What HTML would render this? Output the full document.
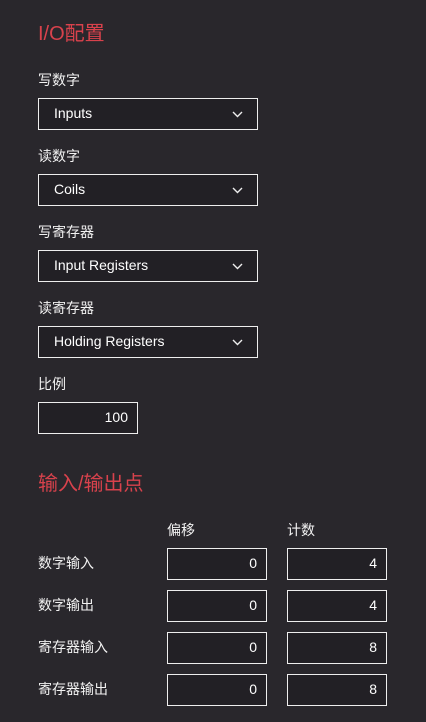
<!DOCTYPE html>
<html><head><meta charset="utf-8"><style>
body{margin:0;width:426px;height:722px;background:#29272c;font-family:"Liberation Sans","Noto Sans CJK SC",sans-serif;color:#fff;position:relative;overflow:hidden}
.a{position:absolute}
.t{color:#d8424c;font-size:20px;line-height:24px}
.l{font-size:14px;line-height:18px;color:#f2f2f2}
.box{position:absolute;border:1.5px solid #eee;box-sizing:border-box;background:#222025}
.sel{left:38px;width:220px;height:32px;font-size:14px;line-height:29px;padding-left:15px}
.sel svg{position:absolute;right:14px;top:12px}
.num{width:100px;height:32px;font-size:14px;line-height:29px;text-align:right;padding-right:9px}
</style></head><body>
<div class="a t" style="left:38px;top:22px">I/O配置</div>
<div class="a l" style="left:38px;top:71px">写数字</div>
<div class="box sel" style="top:98px">Inputs<svg width="11" height="7"><path d="M1 1L5.5 5.5L10 1" stroke="#eee" stroke-width="1.4" fill="none"/></svg></div>
<div class="a l" style="left:38px;top:147px">读数字</div>
<div class="box sel" style="top:174px">Coils<svg width="11" height="7"><path d="M1 1L5.5 5.5L10 1" stroke="#eee" stroke-width="1.4" fill="none"/></svg></div>
<div class="a l" style="left:38px;top:223px">写寄存器</div>
<div class="box sel" style="top:250px">Input Registers<svg width="11" height="7"><path d="M1 1L5.5 5.5L10 1" stroke="#eee" stroke-width="1.4" fill="none"/></svg></div>
<div class="a l" style="left:38px;top:299px">读寄存器</div>
<div class="box sel" style="top:326px">Holding Registers<svg width="11" height="7"><path d="M1 1L5.5 5.5L10 1" stroke="#eee" stroke-width="1.4" fill="none"/></svg></div>
<div class="a l" style="left:38px;top:375px">比例</div>
<div class="box num" style="left:38px;top:402px">100</div>
<div class="a t" style="left:38px;top:472px">输入/输出点</div>
<div class="a l" style="left:167px;top:521px">偏移</div>
<div class="a l" style="left:287px;top:521px">计数</div>
<div class="a l" style="left:38px;top:554px">数字输入</div>
<div class="box num" style="left:167px;top:548px">0</div><div class="box num" style="left:287px;top:548px">4</div>
<div class="a l" style="left:38px;top:596px">数字输出</div>
<div class="box num" style="left:167px;top:590px">0</div><div class="box num" style="left:287px;top:590px">4</div>
<div class="a l" style="left:38px;top:638px">寄存器输入</div>
<div class="box num" style="left:167px;top:632px">0</div><div class="box num" style="left:287px;top:632px">8</div>
<div class="a l" style="left:38px;top:680px">寄存器输出</div>
<div class="box num" style="left:167px;top:674px">0</div><div class="box num" style="left:287px;top:674px">8</div>
</body></html>
